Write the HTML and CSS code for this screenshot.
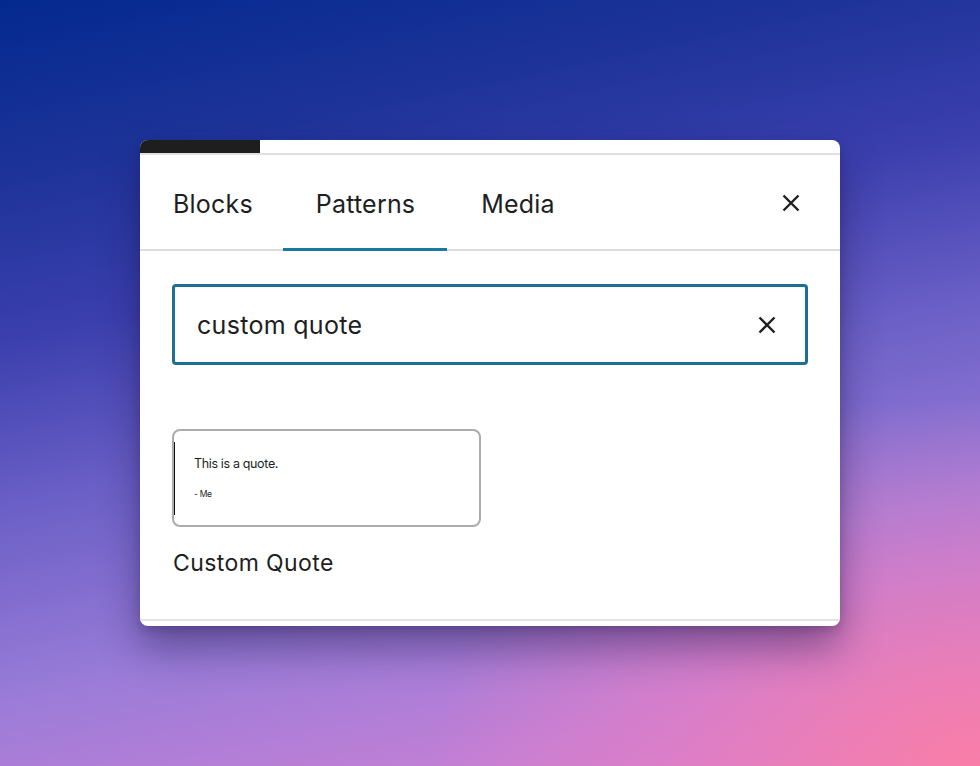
FILE: index.html
```html
<!DOCTYPE html>
<html lang="en">
<head>
<meta charset="utf-8">
<title>Inserter</title>
<link rel="stylesheet" href="styles.css">
</head>
<body>
<div class="modal">
  <div class="top-strip"><div class="top-block"></div></div>
  <div class="tabs">
    <div class="tab">Blocks</div>
    <div class="tab active">Patterns</div>
    <div class="tab">Media</div>
    <button class="close" aria-label="Close">
      <svg viewBox="0 0 24 24" width="24" height="24"><path d="M4.5 4.5 L19.5 19.5 M19.5 4.5 L4.5 19.5" stroke="#1e1e1e" stroke-width="2.4" fill="none"/></svg>
    </button>
  </div>
  <div class="content">
    <div class="search">
      <span class="search-text">custom quote</span>
      <svg class="search-clear" viewBox="0 0 24 24" width="24" height="24"><path d="M4.5 4.5 L19.5 19.5 M19.5 4.5 L4.5 19.5" stroke="#1e1e1e" stroke-width="2.4" fill="none"/></svg>
    </div>
    <div class="pattern">
      <div class="preview">
        <div class="quote">
          <p class="quote-text">This is a quote.</p>
          <p class="quote-cite">- Me</p>
        </div>
      </div>
      <div class="pattern-label">Custom Quote</div>
    </div>
  </div>
  <div class="bottom-strip"></div>
</div>
</body>
</html>
```

FILE: styles.css
```css
html, body {
  margin: 0;
  padding: 0;
}
body {
  width: 980px;
  height: 766px;
  overflow: hidden;
  font-family: Inter, "Noto Sans", sans-serif;
  color: #1e1e1e;
  background:
    radial-gradient(ellipse 70% 60% at 100% 100%, rgba(250,125,165,0.95) 0%, rgba(240,125,190,0.5) 45%, rgba(230,125,200,0) 80%),
    linear-gradient(168deg, #03298f 0%, #1d3399 18%, #3b3fae 35%, #6a5fc6 52%, #9a7cd8 72%, #c07fd6 88%, #d57fcc 100%);
  display: flex;
  align-items: center;
  justify-content: center;
}
.modal {
  width: 700px;
  height: 486px;
  background: #fff;
  border-radius: 8px;
  overflow: hidden;
  display: flex;
  flex-direction: column;
  box-shadow: 0 22px 40px rgba(30, 20, 70, 0.45), 0 4px 10px rgba(30,20,70,0.2);
}
.top-strip {
  height: 13px;
  border-bottom: 2px solid #e0e0e0;
  flex: none;
}
.top-block {
  width: 120px;
  height: 13px;
  background: #1e1e1e;
}
.tabs {
  height: 94px;
  border-bottom: 2px solid #dddddd;
  display: flex;
  align-items: stretch;
  flex: none;
}
.tab {
  padding: 4px 32px 0;
  font-size: 25px;
  display: flex;
  align-items: center;
  position: relative;
  letter-spacing: 0.2px;
}
.tab:first-child {
  padding-left: 33px;
  padding-right: 30px;
}
.tab.active {
  padding-left: 33px;
}
.tab:nth-child(3) {
  padding-left: 34px;
}
.tab.active::after {
  content: "";
  position: absolute;
  left: 0;
  right: 0;
  bottom: -2px;
  height: 3px;
  background: #1b79a1;
}
.close {
  margin-left: auto;
  margin-right: 37px;
  background: none;
  border: 0;
  padding: 2px 0 0;
  display: flex;
  align-items: center;
}
.content {
  flex: 1;
  padding: 33px 32px 0;
  border-bottom: 2px solid #e3e3e3;
}
.search {
  height: 74px;
  border: 3px solid #1e6f96;
  border-radius: 4px;
  display: flex;
  align-items: center;
  padding: 1px 26px 0 22px;
}
.search-text {
  font-size: 25px;
  letter-spacing: 0.3px;
  flex: 1;
}
.pattern {
  margin-top: 64px;
}
.preview {
  width: 305px;
  height: 94px;
  border: 2px solid #ababab;
  border-radius: 8px;
  overflow: hidden;
  display: flex;
  align-items: center;
}
.quote {
  border-left: 2px solid #111;
  margin-left: -1px;
  padding: 14px 0 14px 19px;
  height: 45px;
  font-family: Inter, sans-serif;
}
.quote-text {
  margin: 1px 0 0;
  font-size: 12.5px;
  letter-spacing: -0.35px;
  line-height: 14px;
}
.quote-cite {
  margin: 18px 0 0;
  font-size: 8.5px;
  letter-spacing: -0.3px;
  line-height: 10px;
}
.pattern-label {
  margin-top: 22px;
  font-size: 23px;
  letter-spacing: 0.4px;
  margin-left: 1px;
}
.bottom-strip {
  height: 5px;
  flex: none;
}
```
